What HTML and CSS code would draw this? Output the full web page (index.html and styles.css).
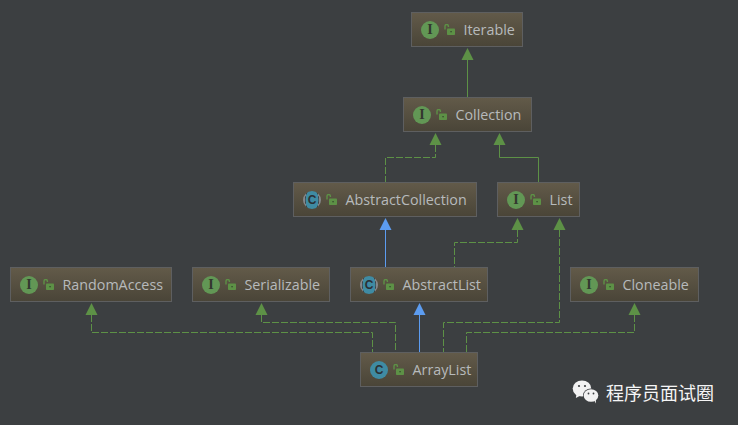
FILE: index.html
```html
<!DOCTYPE html>
<html lang="en">
<head>
<meta charset="utf-8">
<title>ArrayList diagram</title>
<link rel="stylesheet" href="styles.css">
</head>
<body>
<main class="canvas">
  <svg class="edges" width="738" height="425" viewBox="0 0 738 425">
    <defs>
      <g id="head-g"><path d="M0 0l6 12h-12z" fill="#5d9146"/></g>
      <g id="head-b"><path d="M0 0l6 12h-12z" fill="#5c9cf0"/></g>
      <symbol id="lock" viewBox="0 0 11 11">
        <path d="M1 5.500V2.200a1.700 1.700 0 0 1 3.400 0V3" fill="none" stroke="#5d9146" stroke-width="1.400"/>
        <rect x="3" y="4.500" width="8" height="6.500" rx=".8" fill="#5d9146"/>
        <rect x="6.200" y="7" width="1.800" height="1.300" fill="#3e5a33"/>
      </symbol>
    </defs>
    <g fill="none" stroke="#5d9146" stroke-width="1">
      <path d="M467.5 60V97"/>
      <path d="M499.5 145V157.5H538.5V182"/>
    </g>
    <g fill="none" stroke="#5d9146" stroke-width="1" stroke-dasharray="7 2">
      <path d="M435.5 145V157.5H385.5V182"/>
      <path d="M517.5 230V242.5H454.5V267"/>
      <path d="M559.5 230V322.5H443.5V352"/>
      <path d="M261.5 315V322.5H395.5V352"/>
      <path d="M91.5 315V332.5H372.5V352"/>
      <path d="M634.5 315V332.5H466.5V352"/>
    </g>
    <g fill="none" stroke="#5c9cf0" stroke-width="1">
      <path d="M385.5 230V267"/>
      <path d="M419.5 315V352"/>
    </g>
    <use href="#head-g" x="467.5" y="48"/>
    <use href="#head-g" x="435.5" y="133"/>
    <use href="#head-g" x="499.5" y="133"/>
    <use href="#head-b" x="385.5" y="218"/>
    <use href="#head-g" x="517.5" y="218"/>
    <use href="#head-g" x="559.5" y="218"/>
    <use href="#head-g" x="91.5" y="303"/>
    <use href="#head-g" x="261.5" y="303"/>
    <use href="#head-b" x="419.5" y="303"/>
    <use href="#head-g" x="634.5" y="303"/>
  </svg>

  <div class="node n-iterable"><span class="badge badge-i">I</span><svg class="lock"><use href="#lock"/></svg><span class="name">Iterable</span></div>
  <div class="node n-collection"><span class="badge badge-i">I</span><svg class="lock"><use href="#lock"/></svg><span class="name">Collection</span></div>
  <div class="node n-abscoll"><span class="badge badge-a">C</span><svg class="lock"><use href="#lock"/></svg><span class="name">AbstractCollection</span></div>
  <div class="node n-list"><span class="badge badge-i">I</span><svg class="lock"><use href="#lock"/></svg><span class="name">List</span></div>
  <div class="node n-random"><span class="badge badge-i">I</span><svg class="lock"><use href="#lock"/></svg><span class="name">RandomAccess</span></div>
  <div class="node n-serial"><span class="badge badge-i">I</span><svg class="lock"><use href="#lock"/></svg><span class="name">Serializable</span></div>
  <div class="node n-abslist"><span class="badge badge-a">C</span><svg class="lock"><use href="#lock"/></svg><span class="name">AbstractList</span></div>
  <div class="node n-clone"><span class="badge badge-i">I</span><svg class="lock"><use href="#lock"/></svg><span class="name">Cloneable</span></div>
  <div class="node n-array"><span class="badge badge-c">C</span><svg class="lock"><use href="#lock"/></svg><span class="name">ArrayList</span></div>

  <div class="mark">
    <svg class="wechat" width="28" height="24" viewBox="0 0 28 24">
      <ellipse cx="10" cy="8.5" rx="9.3" ry="8" fill="#f2f2f2"/>
      <path d="M4.5 13.5l-.6 4.500 4.600-2.500z" fill="#f2f2f2"/>
      <ellipse cx="19" cy="15.500" rx="8" ry="7" fill="#3c3f41"/>
      <ellipse cx="19" cy="15.500" rx="7.300" ry="6.300" fill="#f2f2f2"/>
      <path d="M22 20l2 3.500-.2-4.500z" fill="#f2f2f2"/>
      <circle cx="7" cy="6" r="1.100" fill="#3c3f41"/>
      <circle cx="13" cy="6" r="1.100" fill="#3c3f41"/>
      <circle cx="16.500" cy="13.500" r=".9" fill="#3c3f41"/>
      <circle cx="21.500" cy="13.500" r=".9" fill="#3c3f41"/>
    </svg>
    <span class="mark-text">程序员面试圈</span>
  </div>
</main>
</body>
</html>
```
FILE: styles.css
```css
html, body {
  margin: 0;
  padding: 0;
  background: #3c3f41;
}

.canvas {
  position: relative;
  width: 738px;
  height: 425px;
  overflow: hidden;
  background: #3c3f41;
  font-family: "Open Sans", "Liberation Sans", sans-serif;
}

.edges {
  position: absolute;
  left: 0;
  top: 0;
}

.node {
  position: absolute;
  box-sizing: border-box;
  height: 35px;
  display: flex;
  align-items: center;
  padding-left: 9px;
  border: 1px solid #5e5f60;
  background: linear-gradient(#625a49, #4a4538);
}

.n-iterable { left: 411px; top: 12px; width: 112px; }
.n-collection { left: 403px; top: 97px; width: 129px; }
.n-abscoll { left: 293px; top: 182px; width: 184px; }
.n-list { left: 497px; top: 182px; width: 83px; }
.n-random { left: 10px; top: 267px; width: 162px; }
.n-serial { left: 192px; top: 267px; width: 138px; }
.n-abslist { left: 350px; top: 267px; width: 138px; }
.n-clone { left: 570px; top: 267px; width: 129px; }
.n-array { left: 360px; top: 352px; width: 118px; }

.badge {
  flex: none;
  box-sizing: border-box;
  width: 18px;
  height: 18px;
  border-radius: 50%;
  display: flex;
  align-items: center;
  justify-content: center;
  color: #33382f;
  font-weight: 700;
  line-height: 1;
}

.badge-i {
  background: #629755;
  font-family: "Liberation Serif", serif;
  font-size: 14px;
}

.badge-c {
  background: #3f8ba3;
  color: #2b3035;
  font-family: "Liberation Sans", sans-serif;
  font-size: 12px;
}

.badge-a {
  background:
    radial-gradient(ellipse 7px 12px at center, #3f8ba3 88%, #3c3f41 96%, #85878a 100%),
    #85878a;
  color: #2b3035;
  font-family: "Liberation Sans", sans-serif;
  font-size: 12px;
}

.lock {
  flex: none;
  width: 11px;
  height: 11px;
  margin-left: 5px;
}

.name {
  margin-left: 8.5px;
  padding-top: 2px;
  color: #b7babc;
  font-size: 14.3px;
  line-height: 1;
  white-space: nowrap;
}

.mark {
  position: absolute;
  left: 572px;
  top: 380px;
  display: flex;
  align-items: center;
  gap: 6px;
}

.mark-text {
  color: #f5f5f5;
  font-family: "Noto Sans CJK SC", sans-serif;
  font-size: 18px;
  line-height: 24px;
}
```
